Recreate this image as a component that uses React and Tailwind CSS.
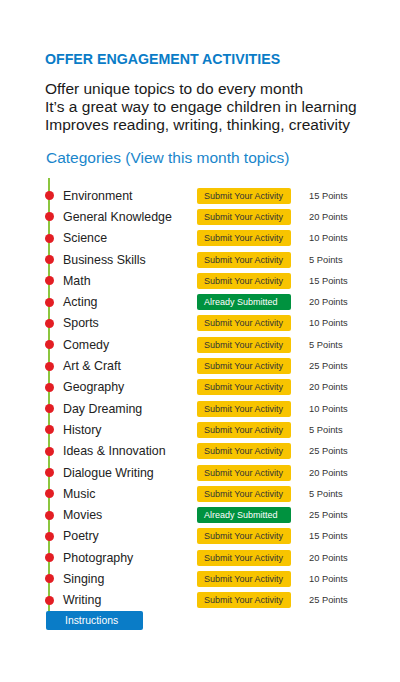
import React from "react";

const rows = [
  ["Environment", false, 15],
  ["General Knowledge", false, 20],
  ["Science", false, 10],
  ["Business Skills", false, 5],
  ["Math", false, 15],
  ["Acting", true, 20],
  ["Sports", false, 10],
  ["Comedy", false, 5],
  ["Art & Craft", false, 25],
  ["Geography", false, 20],
  ["Day Dreaming", false, 10],
  ["History", false, 5],
  ["Ideas & Innovation", false, 25],
  ["Dialogue Writing", false, 20],
  ["Music", false, 5],
  ["Movies", true, 25],
  ["Poetry", false, 15],
  ["Photography", false, 20],
  ["Singing", false, 10],
  ["Writing", false, 25],
];

export default function App() {
  return (
    <div className="w-[400px] h-[682px] bg-white pt-[50px] font-['Liberation_Sans',Arial,sans-serif]">
      <h1 className="ml-[45px] text-[14.2px] leading-[18px] font-bold text-[#0a7cc7]">
        OFFER ENGAGEMENT ACTIVITIES
      </h1>
      <div className="ml-[45px] mt-[12px] text-[15.5px] leading-[18px] text-[#1a1a1a]">
        <p>Offer unique topics to do every month</p>
        <p>It’s a great way to engage children in learning</p>
        <p>Improves reading, writing, thinking, creativity</p>
      </div>
      <p className="ml-[46px] mt-[14px] text-[15.5px] leading-[20px] text-[#1a86cb]">
        Categories (View this month topics)
      </p>
      <div className="ml-[48px] mt-[10px] border-l-2 border-[#8cc63f] pt-[7px]">
        {rows.map(([name, done, pts]) => (
          <div key={name} className="flex items-center h-[21.3px]">
            <span className="w-[9px] h-[9px] -ml-[5.5px] rounded-full bg-[#e31e24] shrink-0" />
            <span className="ml-[9.5px] w-[134px] shrink-0 text-[12.4px] leading-[16px] text-[#222]">{name}</span>
            {done ? (
              <span className="w-[94px] h-[16px] shrink-0 rounded-[2px] bg-[#00923f] text-white text-[9px] leading-[16px] pl-[7px] whitespace-nowrap">
                Already Submitted
              </span>
            ) : (
              <span className="w-[94px] h-[16px] shrink-0 rounded-[2px] bg-[#f8c400] text-[#333] text-[9px] leading-[16px] pl-[7px] whitespace-nowrap">
                Submit Your Activity
              </span>
            )}
            <span className="ml-[18px] text-[9.3px] leading-[14px] text-[#333] whitespace-nowrap">{pts} Points</span>
          </div>
        ))}
      </div>
      <div className="ml-[46px] w-[97px] h-[19px] rounded-[2px] bg-[#0a7cc7] text-white text-[10.4px] leading-[19px] pl-[19px]">
        Instructions
      </div>
    </div>
  );
}
